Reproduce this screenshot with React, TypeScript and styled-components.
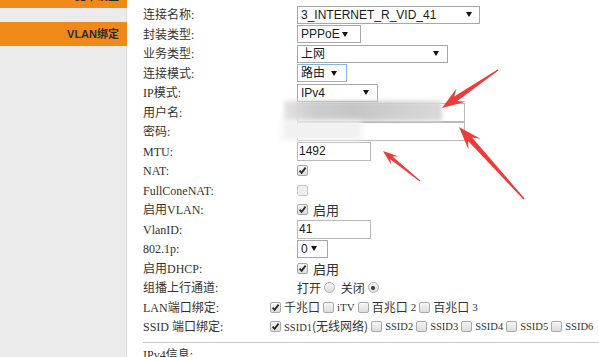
import React from 'react';
import styled, { createGlobalStyle } from 'styled-components';

const Global = createGlobalStyle`
  html, body { margin: 0; padding: 0; background: #fff; }
  body {
    width: 599px; height: 357px; overflow: hidden;
    font-family: "Noto Sans CJK SC", sans-serif;
    text-autospace: no-autospace;
  }
`;

const Page = styled.div`
  position: relative;
  display: flex;
  width: 599px;
  height: 357px;
  overflow: hidden;
  background: #fff;
`;

const Sidebar = styled.nav`
  width: 126px;
  flex: none;
  background: #ebebeb;
  border-right: 1px solid #dadada;
  display: flex;
  flex-direction: column;
  gap: 14px;
`;

const MenuItem = styled.div<{ $clipped?: boolean }>`
  height: 24px;
  margin-right: -1px;
  margin-top: ${p => (p.$clipped ? -16 : 0)}px;
  background: #ef8a18;
  color: #2b2b2b;
  font: bold 11px/24px "Liberation Sans", "Noto Sans CJK SC", sans-serif;
  text-align: right;
  padding-right: 8px;
`;

const Main = styled.main`
  flex: 1;
  min-width: 0;
  padding: 5px 0 0 16px;
  display: flex;
  flex-direction: column;
`;

const Form = styled.div`
  display: grid;
  grid-template-columns: 154px 1fr;
  grid-auto-rows: 19.5px;
  align-items: center;
`;

const FieldLabel = styled.div`
  font-size: 12px;
  line-height: 1;
  color: #333;
  white-space: nowrap;
`;

const Field = styled.div<{ $shift?: number }>`
  display: flex;
  align-items: center;
  gap: 3px;
  margin-left: ${p => (p.$shift ? -p.$shift : 0)}px;
  font-size: 12px;
  line-height: 1;
  color: #333;
  white-space: nowrap;
`;

const Ascii = styled.span<{ $size: number }>`
  font-family: "Liberation Serif", serif;
  font-size: ${p => p.$size}px;
`;

function Txt({ children, size = 12 }: { children: string; size?: number }) {
  return (
    <>
      {children.split(/([A-Za-z0-9 .:]+)/).map((s, i) =>
        !s ? null : /^[A-Za-z0-9 .:]+$/.test(s) ? (
          <Ascii key={i} $size={size}>
            {s}
          </Ascii>
        ) : (
          <React.Fragment key={i}>{s}</React.Fragment>
        )
      )}
    </>
  );
}

const SelectBox = styled.div<{ $w: number; $gap: number; $focus?: boolean }>`
  box-sizing: border-box;
  width: ${p => p.$w}px;
  height: 18px;
  border: 1px solid ${p => (p.$focus ? '#86b3e3' : '#a8a8a8')};
  background: #fff;
  display: flex;
  align-items: center;
  padding: 0 ${p => p.$gap}px 0 3px;
  font: 12px/16px "Liberation Sans", "Noto Sans CJK SC", sans-serif;
  color: #1a1a1a;
`;

const SelectText = styled.span`
  flex: 1;
  min-width: 0;
  white-space: nowrap;
`;

const Caret = styled.span`
  flex: none;
  width: 0;
  height: 0;
  border-left: 3px solid transparent;
  border-right: 3px solid transparent;
  border-top: 5px solid #111;
`;

const TextInput = styled.div<{ $w: number }>`
  box-sizing: border-box;
  width: ${p => p.$w}px;
  height: 19px;
  border: 1px solid #b9b9b9;
  background: #fff;
  padding-left: 1px;
  display: flex;
  align-items: center;
  font: 12px/16px "Liberation Sans", sans-serif;
  color: #1a1a1a;
`;

const Box = styled.span<{ $dim?: boolean }>`
  box-sizing: border-box;
  display: inline-flex;
  align-items: center;
  justify-content: center;
  flex: none;
  width: 11px;
  height: 11px;
  border: 1px solid ${p => (p.$dim ? '#c9c9c9' : '#a9a9a9')};
  border-radius: 2px;
  background: ${p => (p.$dim ? '#eeeeee' : 'linear-gradient(#f6f6f6, #dcdcdc)')};
`;

const Radio = styled.span`
  box-sizing: border-box;
  display: inline-flex;
  align-items: center;
  justify-content: center;
  flex: none;
  width: 11px;
  height: 11px;
  border: 1px solid #b3b3b3;
  border-radius: 50%;
  background: linear-gradient(#f6f6f6, #dcdcdc);
`;

const Dot = styled.span`
  width: 4px;
  height: 4px;
  border-radius: 50%;
  background: #333;
`;

const Option = styled.span`
  display: inline-flex;
  align-items: center;
  gap: 3px;
`;

const Enable = styled.span`
  font-size: 13px;
  margin-left: 2px;
`;

const Divider = styled.div`
  margin-top: 5px;
  height: 2px;
  background: #d6d6d6;
  border-top: 1px solid #c4c4c4;
  box-sizing: border-box;
`;

const Section = styled.div`
  margin-top: 5px;
  font-size: 12px;
  line-height: 1;
  color: #333;
`;

const Overlay = styled.svg`
  position: absolute;
  left: 0;
  top: 0;
  pointer-events: none;
`;

const Smudge = styled.div<{ $x: number; $y: number; $w: number; $h: number; $bg: string; $blur: number }>`
  position: absolute;
  left: ${p => p.$x}px;
  top: ${p => p.$y}px;
  width: ${p => p.$w}px;
  height: ${p => p.$h}px;
  background: ${p => p.$bg};
  filter: blur(${p => p.$blur}px);
`;

function Check({ on, dim }: { on?: boolean; dim?: boolean }) {
  return (
    <Box $dim={dim}>
      {on && (
        <svg width="9" height="9" viewBox="0 0 9 9">
          <path d="M1.6 4.6 L3.6 6.8 L7.6 1.6" fill="none" stroke="#2a2a2a" strokeWidth="1.8" />
        </svg>
      )}
    </Box>
  );
}

function Select({ w, gap, focus, children }: { w: number; gap: number; focus?: boolean; children: string }) {
  return (
    <SelectBox $w={w} $gap={gap} $focus={focus}>
      <SelectText>{children}</SelectText>
      <Caret />
    </SelectBox>
  );
}

function Row({ label, shift, children }: { label: string; shift?: number; children?: React.ReactNode }) {
  return (
    <>
      <FieldLabel>
        <Txt>{label}</Txt>
      </FieldLabel>
      <Field $shift={shift}>{children}</Field>
    </>
  );
}

function arrow(x1: number, y1: number, x2: number, y2: number, head: number, hw: number, w0: number, w1: number) {
  const dx = x2 - x1;
  const dy = y2 - y1;
  const len = Math.hypot(dx, dy);
  const ux = dx / len;
  const uy = dy / len;
  const nx = -uy;
  const ny = ux;
  const bx = x2 - ux * head;
  const by = y2 - uy * head;
  const nbx = x2 - ux * head * 0.72;
  const nby = y2 - uy * head * 0.72;
  const pts = [
    [x1 + (nx * w0) / 2, y1 + (ny * w0) / 2],
    [nbx + (nx * w1) / 2, nby + (ny * w1) / 2],
    [bx + (nx * hw) / 2, by + (ny * hw) / 2],
    [x2, y2],
    [bx - (nx * hw) / 2, by - (ny * hw) / 2],
    [nbx - (nx * w1) / 2, nby - (ny * w1) / 2],
    [x1 - (nx * w0) / 2, y1 - (ny * w0) / 2],
  ];
  return pts.map(p => p.map(v => v.toFixed(1)).join(',')).join(' ');
}

const lan = ['iTV', '百兆口2', '百兆口3'];
const ssid = ['SSID2', 'SSID3', 'SSID4', 'SSID5', 'SSID6'];

export default function App() {
  return (
    <Page>
      <Global />
      <Sidebar>
        <MenuItem $clipped>宽带设置</MenuItem>
        <MenuItem>VLAN绑定</MenuItem>
      </Sidebar>
      <Main>
        <Form>
          <Row label="连接名称:">
            <Select w={183} gap={7}>3_INTERNET_R_VID_41</Select>
          </Row>
          <Row label="封装类型:">
            <Select w={64} gap={12}>PPPoE</Select>
          </Row>
          <Row label="业务类型:">
            <Select w={151} gap={8}>上网</Select>
          </Row>
          <Row label="连接模式:">
            <Select w={50} gap={9} focus>路由</Select>
          </Row>
          <Row label="IP模式:">
            <Select w={81} gap={8}>IPv4</Select>
          </Row>
          <Row label="用户名:">
            <TextInput $w={168} />
          </Row>
          <Row label="密码:">
            <TextInput $w={168} />
          </Row>
          <Row label="MTU:">
            <TextInput $w={74}>1492</TextInput>
          </Row>
          <Row label="NAT:">
            <Check on />
          </Row>
          <Row label="FullConeNAT:">
            <Check dim />
          </Row>
          <Row label="启用VLAN:">
            <Check on />
            <Enable>启用</Enable>
          </Row>
          <Row label="VlanID:">
            <TextInput $w={74}>41</TextInput>
          </Row>
          <Row label="802.1p:">
            <Select w={31} gap={10}>0</Select>
          </Row>
          <Row label="启用DHCP:">
            <Check on />
            <Enable>启用</Enable>
          </Row>
          <Row label="组播上行通道:">
            <Option>
              打开
              <Radio />
            </Option>
            <Option>
              &nbsp;关闭
              <Radio>
                <Dot />
              </Radio>
            </Option>
          </Row>
          <Row label="LAN端口绑定:" shift={27}>
            <Option>
              <Check on />
              千兆口
            </Option>
            {lan.map(t => (
              <Option key={t}>
                <Check />
                <Txt size={11}>{t}</Txt>
              </Option>
            ))}
          </Row>
          <Row label="SSID 端口绑定:" shift={27}>
            <Option>
              <Check on />
              <span>
                <Txt size={10.5}>SSID1</Txt>(无线网络)
              </span>
            </Option>
            {ssid.map(t => (
              <Option key={t}>
                <Check />
                <Txt size={10.5}>{t}</Txt>
              </Option>
            ))}
          </Row>
        </Form>
        <Divider />
        <Section>
          <Txt>IPv4信息:</Txt>
        </Section>
      </Main>

      <Smudge $x={284} $y={101} $w={158} $h={20} $bg="linear-gradient(90deg, #e4e4e4, #cdcdcd 18%, #c6c6c6 45%, #d1d1d1 75%, #d9d9d9)" $blur={2} />
      <Smudge $x={282} $y={121} $w={80} $h={19} $bg="#f1f1f1" $blur={3} />

      <Overlay width="599" height="357" viewBox="0 0 599 357">
        <polygon points={arrow(498, 70, 442, 108, 23, 16, 1.5, 5.5)} fill="#f03a3a" />
        <polygon points={arrow(524, 199, 459, 127, 23, 16, 1.5, 5.5)} fill="#f03a3a" />
        <polygon points={arrow(420, 181, 383, 151, 15, 11, 1, 3.5)} fill="#f03a3a" />
      </Overlay>
    </Page>
  );
}
